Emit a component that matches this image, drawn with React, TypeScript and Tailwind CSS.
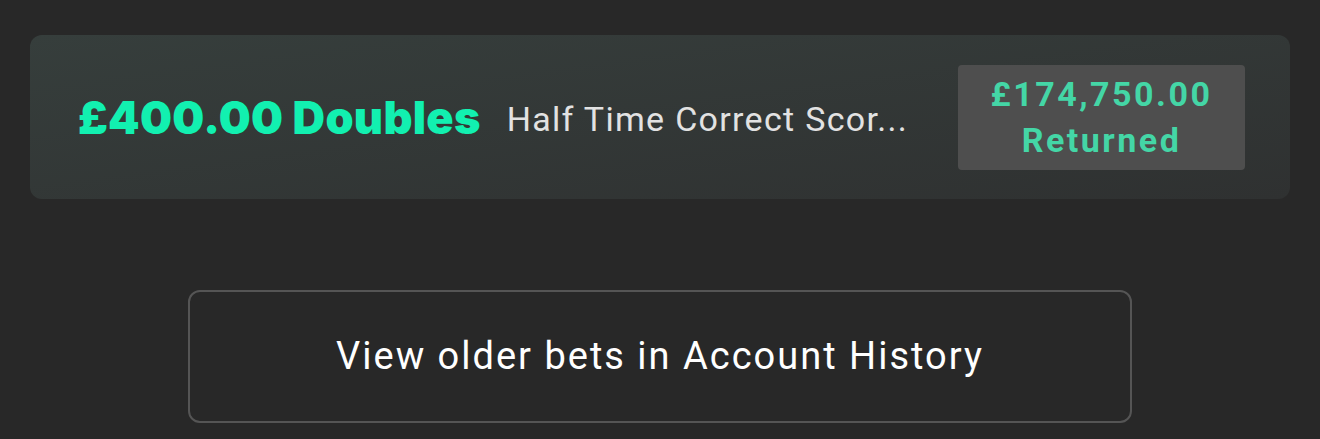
export default function App() {
  return (
    <div className="min-h-[439px] w-full bg-[#282828] px-[30px] pt-[35px] font-['Roboto',sans-serif]">
      {/* bet summary card */}
      <div className="flex h-[164px] items-center rounded-[12px] bg-gradient-to-br from-[#363e3c] to-[#2f3131] pl-[48px] pr-[45px]">
        <span className="whitespace-nowrap font-['Inter',sans-serif] text-[45px] font-black leading-none tracking-[0.3px] text-[#12f0b0]">
          £400.00 Doubles
        </span>
        <span className="ml-[26px] mt-[4px] flex-1 truncate text-[34px] tracking-[1.3px] text-[#e2e2e2]">
          Half Time Correct Scor...
        </span>
        <div className="flex h-[105px] w-[287px] flex-col items-center justify-center rounded-[4px] bg-[#4e4e4e] text-[34px] font-bold leading-[46px] tracking-[2.5px] text-[#44d6a6]">
          <span>£174,750.00</span>
          <span>Returned</span>
        </div>
      </div>

      <div className="flex justify-center pt-[91px]">
        <button className="flex h-[133px] w-[944px] items-center justify-center rounded-[12px] border-2 border-[#555555] text-[38px] tracking-[2px] text-white">
          View older bets in Account History
        </button>
      </div>
    </div>
  );
}
